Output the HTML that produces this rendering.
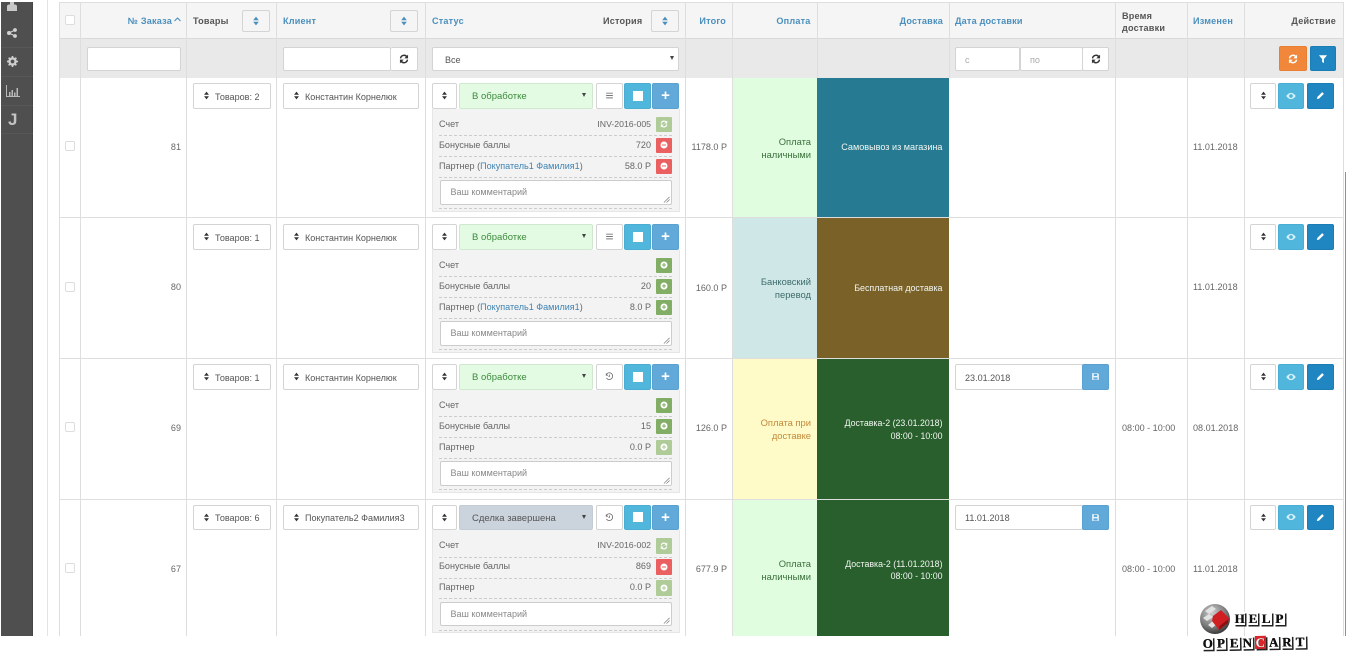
<!DOCTYPE html>
<html lang="ru"><head><meta charset="utf-8"><title>Заказы</title>
<style>
*{box-sizing:border-box}
html,body{margin:0;padding:0;width:1346px;height:660px;overflow:hidden;background:#fff}
body{font-family:"Liberation Sans","DejaVu Sans",sans-serif;font-size:9.05px;color:#666;position:relative}
#clip{position:absolute;left:0;top:0;width:1346px;height:636px;overflow:hidden;filter:blur(.3px)}
.b{position:absolute}
.t{position:absolute;line-height:14px;white-space:nowrap}
.r{text-align:right}
.h{font-weight:bold;color:#555;font-size:9.1px;letter-spacing:.2px;margin-top:1px}
.l{color:#4a8fbd}
.row{position:absolute;left:0;width:1346px;height:142px}
.vl{position:absolute;top:0;width:1px;background:#dedede}
.btn{position:absolute;height:25.5px;border:1px solid #d4d4d4;border-radius:2px;background:#fff;display:flex;align-items:center;justify-content:center}
.wb{white-space:nowrap;justify-content:flex-start;padding-left:9px;padding-top:2px;color:#555}
.wb svg{margin-top:-2px}
.bl1{background:#50b6dc;border-color:#4aaed4}
.bl2{background:#60a9d9;border-color:#58a1d1}
.dk{background:#1f86c2;border-color:#1c7db5}
.sel{left:459px;width:134px;top:5px;border-color:#cfe8cf;background:#e3fbe3;color:#3d8a3d;justify-content:flex-start;padding-left:12px;padding-top:2px;font-size:9.5px}
.sel.g{background:#cbd3dc;border-color:#c3cbd4;color:#555}
.arr{position:absolute;right:6px;top:9px;width:0;height:0;border-left:2.5px solid transparent;border-right:2.5px solid transparent;border-top:4px solid #444}
.panel{position:absolute;left:431.5px;width:248px;top:30.5px;height:103px;background:#f3f3f3;border:1px solid #e6e6e6;border-top:0}
.dash{position:absolute;left:439px;width:233px;height:0;border-top:1px dashed #ccc}
.ta{position:absolute;left:439.5px;width:232px;top:102px;height:24.5px;background:#fff;border:1px solid #ccc;border-radius:2px;color:#888;line-height:23px;padding-left:10px}
.ta svg{position:absolute;right:1px;bottom:1px}
.sb{position:absolute;left:655.5px;width:16px;height:15.5px;border-radius:1px;display:flex;align-items:center;justify-content:center}
.gn{background:#82ad64}.lg{background:#aecb98}.rd{background:#ea5f5f}
.cb{position:absolute;left:65px;width:10px;height:10px;border:1px solid #ddd;border-radius:2px;background:#fff}
.pay{position:absolute;left:733px;width:84px;top:0;height:141px}
.del{position:absolute;left:817px;width:132px;top:0;height:141px}
.dt{color:#f1f6f1;font-size:8.9px}
.dt2{font-size:8.8px;margin-top:1px;line-height:12.5px}
.p{font-size:9.4px;margin-top:1px}
.logo span{display:inline-block;color:#111;background:#fff;font-family:"Liberation Serif",serif;font-weight:bold;text-shadow:.4px 0 #000;box-shadow:1.5px 1.5px 0 #222;margin-right:2px;width:11.2px;text-align:center;line-height:13px;height:13px;font-size:13px}
svg{display:block}
</style></head><body>
<svg width="0" height="0" style="position:absolute"><defs>
<symbol id="sort" viewBox="0 0 10 12"><path d="M5 .5 8.500 5h-7zM5 11.500 1.500 7h7z" fill="currentColor"/></symbol>
<symbol id="ref" viewBox="0 0 16 16"><path d="M2.500 7A5.500 5.500 0 0 1 12.300 4.200M13.500 9A5.500 5.500 0 0 1 3.700 11.800" fill="none" stroke="currentColor" stroke-width="2.300"/><path d="M14.500 1V7H8.500zM1.500 15V9H7.500z" fill="currentColor"/></symbol>
<symbol id="pc" viewBox="0 0 16 16"><path fill-rule="evenodd" d="M8 1a7 7 0 1 1 0 14A7 7 0 0 1 8 1zM7 4v3H4v2h3v3h2V9h3V7H9V4z" fill="currentColor"/></symbol>
<symbol id="mc" viewBox="0 0 16 16"><path fill-rule="evenodd" d="M8 1a7 7 0 1 1 0 14A7 7 0 0 1 8 1zM4 7v2h8V7z" fill="currentColor"/></symbol>
<symbol id="eye" viewBox="0 0 16 12"><path fill-rule="evenodd" d="M8 1c3.500 0 6 2.500 7.500 5C14 8.500 11.500 11 8 11S2 8.500.5 6C2 3.500 4.500 1 8 1zm0 2a3 3 0 1 0 0 6 3 3 0 0 0 0-6z" fill="currentColor"/></symbol>
<symbol id="pen" viewBox="0 0 16 16"><path d="M11 2l3 3-8.500 8.500L1.500 14.500 2.500 10.500z" fill="currentColor"/></symbol>
<symbol id="save" viewBox="0 0 16 16"><path fill-rule="evenodd" d="M2 2h10l2 2v10H2zM5 3v4h6V3zM4.500 9.500V13h7V9.500z" fill="currentColor"/></symbol>
<symbol id="bars" viewBox="0 0 16 16"><path d="M2 3h12v1.600H2zM2 7.200h12v1.600H2zM2 11.400h12V13H2z" fill="currentColor"/></symbol>
<symbol id="hist" viewBox="0 0 16 16"><path d="M3 3.500A6 6 0 1 1 2.500 10.500" fill="none" stroke="currentColor" stroke-width="1.400"/><path d="M1.500 2v4.500H6zM7.500 4.500h1.300v4H6v-1.200h1.500z" fill="currentColor"/></symbol>
<symbol id="fil" viewBox="0 0 16 16"><path d="M1.500 2h13L9.500 8v6.500L6.500 12.500V8z" fill="currentColor"/></symbol>
<symbol id="grip" viewBox="0 0 8 8"><path d="M7.500 1 1 7.500M7.500 4 4 7.500" stroke="#777" stroke-width=".8"/></symbol>
</defs></svg>

<div id="clip">
<!-- sidebar -->
<div class="b" style="left:1px;top:2px;width:32px;height:634px;background:#4f4f4f;border-right:1px solid #454545"></div>
<div class="b" style="left:1px;top:47px;width:32px;height:1px;background:#575757"></div>
<div class="b" style="left:1px;top:76px;width:32px;height:1px;background:#575757"></div>
<div class="b" style="left:1px;top:105px;width:32px;height:1px;background:#575757"></div>
<div class="b" style="left:1px;top:133px;width:32px;height:1px;background:#575757"></div>
<svg class="b" style="left:7px;top:2px" width="10" height="9" viewBox="0 0 10 9"><path d="M3 0h4v2.500H3zM0 4.500C0 3 1 2.500 2 2.500h6c1 0 2 .5 2 2V9H0z" fill="#c9c9c9"/></svg>
<svg class="b" style="left:7px;top:28px" width="10" height="10" viewBox="0 0 10 10"><circle cx="8" cy="2" r="1.900" fill="#d2d2d2"/><circle cx="8" cy="8" r="1.900" fill="#d2d2d2"/><circle cx="2" cy="5" r="2" fill="#d2d2d2"/><path d="M2 5l6-3M2 5l6 3" stroke="#d2d2d2" stroke-width="1.100"/></svg>
<svg class="b" style="left:6.500px;top:56px" width="11" height="11" viewBox="0 0 12 12"><circle cx="6" cy="6" r="3.300" fill="none" stroke="#cfcfcf" stroke-width="2.600"/><path d="M6 0v2M6 10v2M0 6h2M10 6h2M1.800 1.800l1.400 1.400M8.800 8.800l1.400 1.400M10.200 1.800L8.800 3.200M3.200 8.800l-1.400 1.400" stroke="#cfcfcf" stroke-width="1.800"/></svg>
<svg class="b" style="left:5.500px;top:85px" width="14" height="12" viewBox="0 0 14 12"><path d="M.5 0v11.500H14" fill="none" stroke="#b9b9b9"/><path d="M3 7h1.500v4H3zM5.500 5H7v6H5.500zM8 7.500h1.500V11H8zM10.500 3H12v8h-1.500z" fill="#b9b9b9"/></svg>
<div class="t" style="left:8px;top:111px;font-size:17px;line-height:18px;font-weight:bold;color:#c4c4c4">J</div>

<div class="b" style="left:47px;top:0;width:1px;height:636px;background:#e4e4e4"></div>
<!-- header bands -->
<div class="b" style="left:59px;top:2px;width:1285px;height:37px;background:#f5f5f5;border-top:1px solid #dedede;border-bottom:1px solid #d9d9d9"></div>
<div class="b" style="left:59px;top:39px;width:1285px;height:39px;background:#e9e9e9"></div>

<!-- colored cells -->
<div class="row" style="top:78px"><div class="pay" style="background:#e0fde0"></div><div class="del" style="background:#267b92"></div></div>
<div class="row" style="top:218px"><div class="pay" style="background:#cfe8e7"></div><div class="del" style="background:#7a6128"></div></div>
<div class="row" style="top:359px"><div class="pay" style="background:#fefbc8"></div><div class="del" style="background:#285f2c"></div></div>
<div class="row" style="top:499.500px"><div class="pay" style="background:#e0fde0"></div><div class="del" style="background:#285f2c"></div></div>

<!-- grid -->
<div class="vl" style="left:59px;top:2px;height:634px"></div>
<div class="vl" style="left:80px;top:2px;height:634px"></div>
<div class="vl" style="left:186px;top:2px;height:634px"></div>
<div class="vl" style="left:276px;top:2px;height:634px"></div>
<div class="vl" style="left:425px;top:2px;height:634px"></div>
<div class="vl" style="left:685px;top:2px;height:634px"></div>
<div class="vl" style="left:732px;top:2px;height:634px"></div>
<div class="vl" style="left:817px;top:2px;height:76px"></div>
<div class="vl" style="left:949px;top:2px;height:76px"></div>
<div class="vl" style="left:1115px;top:2px;height:634px"></div>
<div class="vl" style="left:1187px;top:2px;height:634px"></div>
<div class="vl" style="left:1244px;top:2px;height:634px"></div>
<div class="vl" style="left:1343px;top:2px;height:634px"></div>
<div class="b" style="left:59px;top:217px;width:1285px;height:1px;background:#dedede"></div>
<div class="b" style="left:59px;top:358px;width:1285px;height:1px;background:#dedede"></div>
<div class="b" style="left:59px;top:498.500px;width:1285px;height:1px;background:#dedede"></div>

<!-- header -->
<div class="cb" style="top:15px"></div>
<div class="t h l r" style="right:1174px;top:13px">№ Заказа</div>
<svg class="b" style="left:174px;top:17px;color:#4a8fbd" width="7" height="5" viewBox="0 0 7 5"><path d="M.5 4 3.500 1l3 3" fill="none" stroke="currentColor" stroke-width="1.100"/></svg>
<div class="t h" style="left:193px;top:13px">Товары</div>
<div class="btn" style="left:242px;top:9.500px;width:28px;height:22.500px;background:#f5f5f5;color:#4a8fbd"><svg width="8" height="10"><use href="#sort"/></svg></div>
<div class="t h l" style="left:283px;top:13px">Клиент</div>
<div class="btn" style="left:390px;top:9.500px;width:28px;height:22.500px;background:#f5f5f5;color:#4a8fbd"><svg width="8" height="10"><use href="#sort"/></svg></div>
<div class="t h l" style="left:432px;top:13px">Статус</div>
<div class="t h" style="left:603px;top:13px">История</div>
<div class="btn" style="left:650.500px;top:9.500px;width:28px;height:22.500px;background:#f5f5f5;color:#4a8fbd"><svg width="8" height="10"><use href="#sort"/></svg></div>
<div class="t h l r" style="right:620px;top:13px">Итого</div>
<div class="t h l r" style="right:535.500px;top:13px">Оплата</div>
<div class="t h l r" style="right:403px;top:13px">Доставка</div>
<div class="t h l" style="left:955px;top:13px">Дата доставки</div>
<div class="t h" style="left:1122px;top:9px;line-height:12px">Время<br>доставки</div>
<div class="t h l" style="left:1193px;top:13px">Изменен</div>
<div class="t h r" style="right:10px;top:13px">Действие</div>

<!-- filters -->
<div class="btn" style="left:87px;top:46.500px;width:93.500px;height:24.500px"></div>
<div class="btn" style="left:283px;top:46.500px;width:108px;height:24.500px"></div>
<div class="btn" style="left:391px;top:46.500px;width:27px;height:24.500px;color:#333;border-left:0"><svg width="10" height="10"><use href="#ref"/></svg></div>
<div class="btn wb" style="left:432px;top:46.500px;width:247px;height:24.500px;padding-left:12px">Все<i class="arr" style="top:8px;right:4px"></i></div>
<div class="btn wb" style="left:955px;top:46.500px;width:65px;height:24.500px;color:#aaa">с</div>
<div class="btn wb" style="left:1020px;top:46.500px;width:62.500px;height:24.500px;color:#aaa">по</div>
<div class="btn" style="left:1082px;top:46.500px;width:27px;height:24.500px;color:#333"><svg width="10" height="10"><use href="#ref"/></svg></div>
<div class="btn" style="left:1279px;top:46px;width:27.500px;height:25px;background:#f0873a;border-color:#e87f32;color:#fff"><svg width="10" height="10"><use href="#ref"/></svg></div>
<div class="btn dk" style="left:1309.500px;top:46px;width:26.500px;height:25px;color:#fff"><svg width="10" height="10"><use href="#fil"/></svg></div>

<!-- ROW 1 -->
<div class="row" style="top:78px">
<div class="cb" style="top:63px"></div>
<div class="t r" style="right:1165px;top:62px">81</div>
<div class="btn wb" style="left:193px;top:5px;width:77.500px"><svg width="7" height="9" style="color:#333;margin-right:5px"><use href="#sort"/></svg>Товаров: 2</div>
<div class="btn wb" style="left:283px;top:5px;width:135.500px"><svg width="7" height="9" style="color:#333;margin-right:5px"><use href="#sort"/></svg>Константин Корнелюк</div>
<div class="btn" style="left:432px;top:5px;width:25px;color:#333"><svg width="7" height="9"><use href="#sort"/></svg></div>
<div class="btn sel">В обработке<i class="arr"></i></div>
<div class="btn" style="left:595.500px;top:5px;width:27px;color:#777"><svg width="9" height="9"><use href="#bars"/></svg></div>
<div class="btn bl1" style="left:624px;top:5px;width:27px"><div style="width:10px;height:10px;background:#fff"></div></div>
<div class="btn bl2" style="left:652px;top:5px;width:27px;font-size:15px;font-weight:bold;color:#fff">+</div>
<div class="panel"></div>
<div class="t" style="left:439px;top:38.500px">Счет</div><div class="t r" style="right:695px;top:38.500px;font-size:8.7px">INV-2016-005</div><div class="sb lg" style="top:38.500px;color:#fff"><svg width="8" height="8"><use href="#ref"/></svg></div>
<div class="dash" style="top:57px"></div>
<div class="t" style="left:439px;top:59.500px">Бонусные баллы</div><div class="t r" style="right:695px;top:59.500px">720</div><div class="sb rd" style="top:59.500px;color:#fff"><svg width="8" height="8"><use href="#mc"/></svg></div>
<div class="dash" style="top:78px"></div>
<div class="t" style="left:439px;top:80.500px">Партнер (<span style="color:#3f83b3">Покупатель1 Фамилия1</span>)</div><div class="t r" style="right:695px;top:80.500px">58.0 Р</div><div class="sb rd" style="top:80.500px;color:#fff"><svg width="8" height="8"><use href="#mc"/></svg></div>
<div class="dash" style="top:98.500px"></div>
<div class="ta">Ваш комментарий<svg width="7" height="7"><use href="#grip"/></svg></div>
<div class="dash" style="top:130px"></div>
<div class="t r" style="right:619px;top:62px">1178.0 Р</div>
<div class="t r p" style="right:535px;top:56px;line-height:13px;color:#3c6f3c">Оплата<br>наличными</div>
<div class="t r dt" style="right:403.500px;top:62px;font-size:9.1px">Самовывоз из магазина</div>
<div class="t" style="left:1193px;top:62px">11.01.2018</div>
<div class="btn" style="left:1250px;top:5px;width:26px;color:#333"><svg width="7" height="9"><use href="#sort"/></svg></div>
<div class="btn bl1" style="left:1278px;top:5px;width:26px;color:#d6f0f9"><svg width="10" height="8"><use href="#eye"/></svg></div>
<div class="btn dk" style="left:1307px;top:5px;width:27px;color:#fff"><svg width="9" height="9"><use href="#pen"/></svg></div>
</div>

<!-- ROW 2 -->
<div class="row" style="top:219px">
<div class="cb" style="top:63px"></div>
<div class="t r" style="right:1165px;top:61px">80</div>
<div class="btn wb" style="left:193px;top:5px;width:77.500px"><svg width="7" height="9" style="color:#333;margin-right:5px"><use href="#sort"/></svg>Товаров: 1</div>
<div class="btn wb" style="left:283px;top:5px;width:135.500px"><svg width="7" height="9" style="color:#333;margin-right:5px"><use href="#sort"/></svg>Константин Корнелюк</div>
<div class="btn" style="left:432px;top:5px;width:25px;color:#333"><svg width="7" height="9"><use href="#sort"/></svg></div>
<div class="btn sel">В обработке<i class="arr"></i></div>
<div class="btn" style="left:595.500px;top:5px;width:27px;color:#777"><svg width="9" height="9"><use href="#bars"/></svg></div>
<div class="btn bl1" style="left:624px;top:5px;width:27px"><div style="width:10px;height:10px;background:#fff"></div></div>
<div class="btn bl2" style="left:652px;top:5px;width:27px;font-size:15px;font-weight:bold;color:#fff">+</div>
<div class="panel"></div>
<div class="t" style="left:439px;top:38.500px">Счет</div><div class="sb gn" style="top:38.500px;color:#fff"><svg width="8" height="8"><use href="#pc"/></svg></div>
<div class="dash" style="top:57px"></div>
<div class="t" style="left:439px;top:59.500px">Бонусные баллы</div><div class="t r" style="right:695px;top:59.500px">20</div><div class="sb gn" style="top:59.500px;color:#fff"><svg width="8" height="8"><use href="#pc"/></svg></div>
<div class="dash" style="top:78px"></div>
<div class="t" style="left:439px;top:80.500px">Партнер (<span style="color:#3f83b3">Покупатель1 Фамилия1</span>)</div><div class="t r" style="right:695px;top:80.500px">8.0 Р</div><div class="sb gn" style="top:80.500px;color:#fff"><svg width="8" height="8"><use href="#pc"/></svg></div>
<div class="dash" style="top:98.500px"></div>
<div class="ta">Ваш комментарий<svg width="7" height="7"><use href="#grip"/></svg></div>
<div class="dash" style="top:130px"></div>
<div class="t r" style="right:619px;top:62px">160.0 Р</div>
<div class="t r p" style="right:535px;top:55px;line-height:13px;color:#3d6a6a">Банковский<br>перевод</div>
<div class="t r dt" style="right:403.500px;top:62px">Бесплатная доставка</div>
<div class="t" style="left:1193px;top:61px">11.01.2018</div>
<div class="btn" style="left:1250px;top:5px;width:26px;color:#333"><svg width="7" height="9"><use href="#sort"/></svg></div>
<div class="btn bl1" style="left:1278px;top:5px;width:26px;color:#d6f0f9"><svg width="10" height="8"><use href="#eye"/></svg></div>
<div class="btn dk" style="left:1307px;top:5px;width:27px;color:#fff"><svg width="9" height="9"><use href="#pen"/></svg></div>
</div>

<!-- ROW 3 -->
<div class="row" style="top:359px">
<div class="cb" style="top:63px"></div>
<div class="t r" style="right:1165px;top:62px">69</div>
<div class="btn wb" style="left:193px;top:5px;width:77.500px"><svg width="7" height="9" style="color:#333;margin-right:5px"><use href="#sort"/></svg>Товаров: 1</div>
<div class="btn wb" style="left:283px;top:5px;width:135.500px"><svg width="7" height="9" style="color:#333;margin-right:5px"><use href="#sort"/></svg>Константин Корнелюк</div>
<div class="btn" style="left:432px;top:5px;width:25px;color:#333"><svg width="7" height="9"><use href="#sort"/></svg></div>
<div class="btn sel">В обработке<i class="arr"></i></div>
<div class="btn" style="left:595.500px;top:5px;width:27px;color:#666"><svg width="9" height="9"><use href="#hist"/></svg></div>
<div class="btn bl1" style="left:624px;top:5px;width:27px"><div style="width:10px;height:10px;background:#fff"></div></div>
<div class="btn bl2" style="left:652px;top:5px;width:27px;font-size:15px;font-weight:bold;color:#fff">+</div>
<div class="panel"></div>
<div class="t" style="left:439px;top:38.500px">Счет</div><div class="sb gn" style="top:38.500px;color:#fff"><svg width="8" height="8"><use href="#pc"/></svg></div>
<div class="dash" style="top:57px"></div>
<div class="t" style="left:439px;top:59.500px">Бонусные баллы</div><div class="t r" style="right:695px;top:59.500px">15</div><div class="sb gn" style="top:59.500px;color:#fff"><svg width="8" height="8"><use href="#pc"/></svg></div>
<div class="dash" style="top:78px"></div>
<div class="t" style="left:439px;top:80.500px">Партнер</div><div class="t r" style="right:695px;top:80.500px">0.0 Р</div><div class="sb lg" style="top:80.500px;color:#fff"><svg width="8" height="8"><use href="#pc"/></svg></div>
<div class="dash" style="top:98.500px"></div>
<div class="ta">Ваш комментарий<svg width="7" height="7"><use href="#grip"/></svg></div>
<div class="dash" style="top:130px"></div>
<div class="t r" style="right:619px;top:62px">126.0 Р</div>
<div class="t r p" style="right:535px;top:56px;line-height:13px;color:#c2893a">Оплата при<br>доставке</div>
<div class="t r dt dt2" style="right:403.500px;top:57px">Доставка-2 (23.01.2018)<br>08:00 - 10:00</div>
<div class="btn wb" style="left:955px;top:5px;width:127.500px">23.01.2018</div>
<div class="btn bl2" style="left:1082px;top:5px;width:27px;color:#e8f3fa"><svg width="9" height="9"><use href="#save"/></svg></div>
<div class="t" style="left:1122px;top:62px">08:00 - 10:00</div>
<div class="t" style="left:1193px;top:62px">08.01.2018</div>
<div class="btn" style="left:1250px;top:5px;width:26px;color:#333"><svg width="7" height="9"><use href="#sort"/></svg></div>
<div class="btn bl1" style="left:1278px;top:5px;width:26px;color:#d6f0f9"><svg width="10" height="8"><use href="#eye"/></svg></div>
<div class="btn dk" style="left:1307px;top:5px;width:27px;color:#fff"><svg width="9" height="9"><use href="#pen"/></svg></div>
</div>

<!-- ROW 4 -->
<div class="row" style="top:499.500px">
<div class="cb" style="top:63px"></div>
<div class="t r" style="right:1165px;top:62px">67</div>
<div class="btn wb" style="left:193px;top:5px;width:77.500px"><svg width="7" height="9" style="color:#333;margin-right:5px"><use href="#sort"/></svg>Товаров: 6</div>
<div class="btn wb" style="left:283px;top:5px;width:135.500px"><svg width="7" height="9" style="color:#333;margin-right:5px"><use href="#sort"/></svg>Покупатель2 Фамилия3</div>
<div class="btn" style="left:432px;top:5px;width:25px;color:#333"><svg width="7" height="9"><use href="#sort"/></svg></div>
<div class="btn sel g">Сделка завершена<i class="arr"></i></div>
<div class="btn" style="left:595.500px;top:5px;width:27px;color:#666"><svg width="9" height="9"><use href="#hist"/></svg></div>
<div class="btn bl1" style="left:624px;top:5px;width:27px"><div style="width:10px;height:10px;background:#fff"></div></div>
<div class="btn bl2" style="left:652px;top:5px;width:27px;font-size:15px;font-weight:bold;color:#fff">+</div>
<div class="panel"></div>
<div class="t" style="left:439px;top:38.500px">Счет</div><div class="t r" style="right:695px;top:38.500px;font-size:8.7px">INV-2016-002</div><div class="sb lg" style="top:38.500px;color:#fff"><svg width="8" height="8"><use href="#ref"/></svg></div>
<div class="dash" style="top:57px"></div>
<div class="t" style="left:439px;top:59.500px">Бонусные баллы</div><div class="t r" style="right:695px;top:59.500px">869</div><div class="sb rd" style="top:59.500px;color:#fff"><svg width="8" height="8"><use href="#mc"/></svg></div>
<div class="dash" style="top:78px"></div>
<div class="t" style="left:439px;top:80.500px">Партнер</div><div class="t r" style="right:695px;top:80.500px">0.0 Р</div><div class="sb lg" style="top:80.500px;color:#fff"><svg width="8" height="8"><use href="#pc"/></svg></div>
<div class="dash" style="top:98.500px"></div>
<div class="ta">Ваш комментарий<svg width="7" height="7"><use href="#grip"/></svg></div>
<div class="dash" style="top:130px"></div>
<div class="t r" style="right:619px;top:62px">677.9 Р</div>
<div class="t r p" style="right:535px;top:56px;line-height:13px;color:#3c6f3c">Оплата<br>наличными</div>
<div class="t r dt dt2" style="right:403.500px;top:57px">Доставка-2 (11.01.2018)<br>08:00 - 10:00</div>
<div class="btn wb" style="left:955px;top:5px;width:127.500px">11.01.2018</div>
<div class="btn bl2" style="left:1082px;top:5px;width:27px;color:#e8f3fa"><svg width="9" height="9"><use href="#save"/></svg></div>
<div class="t" style="left:1122px;top:62px">08:00 - 10:00</div>
<div class="t" style="left:1193px;top:62px">11.01.2018</div>
<div class="btn" style="left:1250px;top:5px;width:26px;color:#333"><svg width="7" height="9"><use href="#sort"/></svg></div>
<div class="btn bl1" style="left:1278px;top:5px;width:26px;color:#d6f0f9"><svg width="10" height="8"><use href="#eye"/></svg></div>
<div class="btn dk" style="left:1307px;top:5px;width:27px;color:#fff"><svg width="9" height="9"><use href="#pen"/></svg></div>
</div>
</div>

<div class="b" style="left:1345px;top:172px;width:1px;height:464px;background:#6cac5c"></div>

<!-- logo -->
<svg class="b" style="left:1199px;top:603px" width="32" height="32" viewBox="0 0 32 32">
<defs><radialGradient id="sp" cx=".4" cy=".3" r=".8"><stop offset="0" stop-color="#cfcfcf"/><stop offset=".6" stop-color="#777"/><stop offset="1" stop-color="#222"/></radialGradient></defs>
<circle cx="16" cy="16" r="15" fill="url(#sp)"/>
<path d="M6 8l7-5 4 3-7 5zM4 15l6-4 4 3-6 4zM9 22l5-4 4 3-5 4z" fill="#e2e2e2"/>
<path d="M14 13l8-6 8 8-1 5-9 7-7-9z" fill="#cf1f22"/><path d="M20 27l9-7 .5-4-9 7z" fill="#8d1013"/>
</svg>
<div class="b logo" style="left:1234px;top:612px;white-space:nowrap;display:flex"><span>H</span><span>E</span><span>L</span><span>P</span></div>
<div class="b logo" style="left:1202px;top:636px;white-space:nowrap;display:flex;transform:rotate(-1deg)"><span>O</span><span>P</span><span>E</span><span>N</span><span style="background:#d9262a;color:#fff">C</span><span>A</span><span>R</span><span>T</span></div>
</body></html>
